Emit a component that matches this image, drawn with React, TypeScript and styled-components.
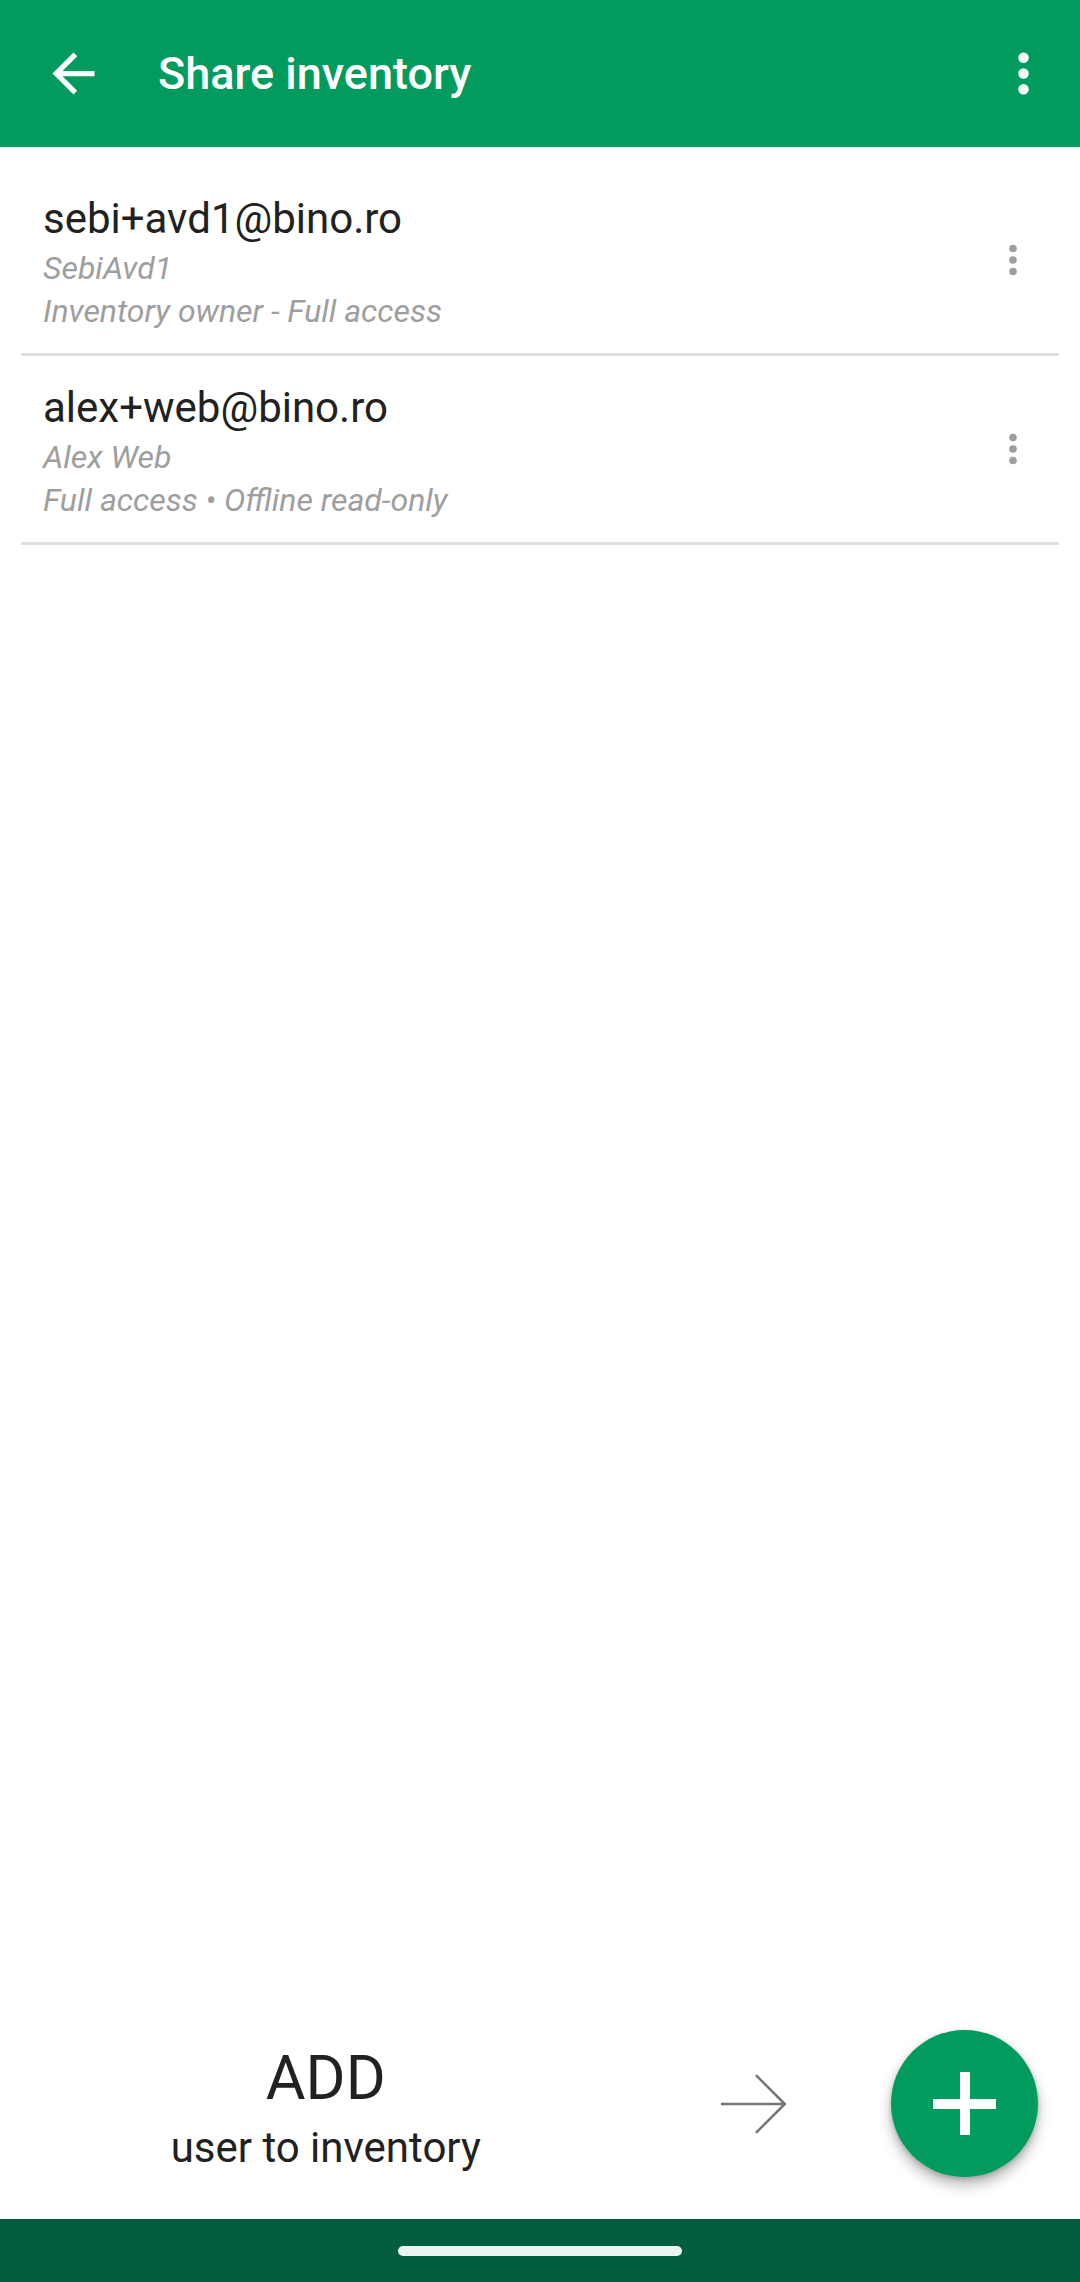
import React from "react";
import styled, { createGlobalStyle } from "styled-components";

const GlobalStyle = createGlobalStyle`
  html, body {
    margin: 0;
    padding: 0;
    background: #fff;
  }
  body {
    font-family: Roboto, "Noto Sans", "Liberation Sans", sans-serif;
    -webkit-font-smoothing: antialiased;
  }
`;

/* ── Page frame ───────────────────────────────── */
const Screen = styled.div`
  display: flex;
  flex-direction: column;
  width: 1080px;
  height: 100vh;
  min-height: 2282px;
  background: #fff;
  overflow: hidden;
`;

/* ── Top app bar ──────────────────────────────── */
const AppBar = styled.header`
  flex-shrink: 0;
  height: 147px;
  background: #029b5e;
  display: flex;
  align-items: center;
  padding: 0 25px 0 42px;
  box-sizing: border-box;
  color: #fff;
`;

const IconButton = styled.span<{ $size?: number }>`
  width: ${({ $size }) => $size ?? 63}px;
  height: ${({ $size }) => $size ?? 63}px;
  display: inline-flex;
  align-items: center;
  justify-content: center;
  flex-shrink: 0;

  svg {
    width: 100%;
    height: 100%;
    display: block;
  }
`;

const Title = styled.h1`
  flex: 1;
  margin: 0 0 0 53px;
  font-size: 45px;
  font-weight: 500;
  line-height: 1;
  letter-spacing: 0;
  white-space: nowrap;
`;

/* ── Member list ──────────────────────────────── */
const List = styled.ul`
  flex: 1;
  list-style: none;
  margin: 0;
  padding: 20px 21px 0;
`;

const Row = styled.li`
  display: flex;
  align-items: center;
  height: 186px;
  padding: 0 23px 0 22px;
  border-bottom: 3px solid #e0e0e0;
`;

const RowText = styled.div`
  flex: 1;
  min-width: 0;
  align-self: flex-start;
  padding-top: 27px;
`;

const Email = styled.div`
  font-size: 42px;
  line-height: 49px;
  color: #212121;
`;

const Meta = styled.div<{ $gap?: number }>`
  margin-top: ${({ $gap }) => $gap ?? 0}px;
  font-size: 32px;
  line-height: 43px;
  font-style: italic;
  color: #9e9e9e;
`;

/* ── Bottom call-to-action ────────────────────── */
const AddBar = styled.div`
  flex-shrink: 0;
  display: flex;
  align-items: center;
  padding: 0 42px 42px 0;
`;

const AddText = styled.div`
  width: 653px;
  padding-top: 10px;
  text-align: center;
  color: #212121;
`;

const AddTitle = styled.div`
  font-size: 61px;
  line-height: 68px;
`;

const AddSub = styled.div`
  margin-top: 10.5px;
  font-size: 42px;
  line-height: 50px;
`;

const Hint = styled.span`
  width: 66px;
  height: 60px;
  margin: 0 104px 0 70px;
  display: inline-flex;

  svg {
    width: 100%;
    height: 100%;
  }
`;

const Fab = styled.button`
  width: 147px;
  height: 147px;
  border: 0;
  border-radius: 50%;
  background: #029b5e;
  display: flex;
  align-items: center;
  justify-content: center;
  padding: 0;
  box-shadow: 0 8px 14px rgba(0, 0, 0, 0.28), 0 2px 5px rgba(0, 0, 0, 0.18);
`;

const Plus = styled.span`
  position: relative;
  width: 63px;
  height: 63px;

  &::before,
  &::after {
    content: "";
    position: absolute;
    background: #fff;
  }
  &::before {
    left: 0;
    right: 0;
    top: 26.5px;
    height: 10px;
  }
  &::after {
    top: 0;
    bottom: 0;
    left: 26.5px;
    width: 10px;
  }
`;

/* ── System navigation bar ────────────────────── */
const NavBar = styled.div`
  flex-shrink: 0;
  height: 63px;
  background: #035d3e;
  display: flex;
  align-items: center;
  justify-content: center;
`;

const Handle = styled.span`
  width: 284px;
  height: 10px;
  border-radius: 5px;
  background: #e9f3ef;
`;

const BackArrow = () => (
  <svg viewBox="0 0 24 24" fill="currentColor">
    <path d="M20 11H7.83l5.59-5.59L12 4l-8 8 8 8 1.41-1.41L7.83 13H20v-2z" />
  </svg>
);

const MoreVert = ({ color }: { color: string }) => (
  <svg viewBox="0 0 24 24" fill={color}>
    <circle cx="12" cy="6" r="2" />
    <circle cx="12" cy="12" r="2" />
    <circle cx="12" cy="18" r="2" />
  </svg>
);

const members = [
  { email: "sebi+avd1@bino.ro", name: "SebiAvd1", access: "Inventory owner - Full access" },
  { email: "alex+web@bino.ro", name: "Alex Web", access: "Full access \u2022 Offline read-only" },
];

export default function App() {
  return (
    <>
      <GlobalStyle />
      <Screen>
        <AppBar>
          <IconButton>
            <BackArrow />
          </IconButton>
          <Title>Share inventory</Title>
          <IconButton>
            <MoreVert color="#fff" />
          </IconButton>
        </AppBar>

        <List>
          {members.map((m) => (
            <Row key={m.email}>
              <RowText>
                <Email>{m.email}</Email>
                <Meta $gap={4}>{m.name}</Meta>
                <Meta>{m.access}</Meta>
              </RowText>
              <IconButton $size={46}>
                <MoreVert color="#9e9e9e" />
              </IconButton>
            </Row>
          ))}
        </List>

        <AddBar>
          <AddText>
            <AddTitle>ADD</AddTitle>
            <AddSub>user to inventory</AddSub>
          </AddText>
          <Hint>
            <svg viewBox="0 0 66 60" fill="none" stroke="#757575" strokeWidth="2.5">
              <path d="M0 30H64" />
              <path d="M35 1L64 30L35 59" />
            </svg>
          </Hint>
          <Fab aria-label="Add user">
            <Plus />
          </Fab>
        </AddBar>

        <NavBar>
          <Handle />
        </NavBar>
      </Screen>
    </>
  );
}
